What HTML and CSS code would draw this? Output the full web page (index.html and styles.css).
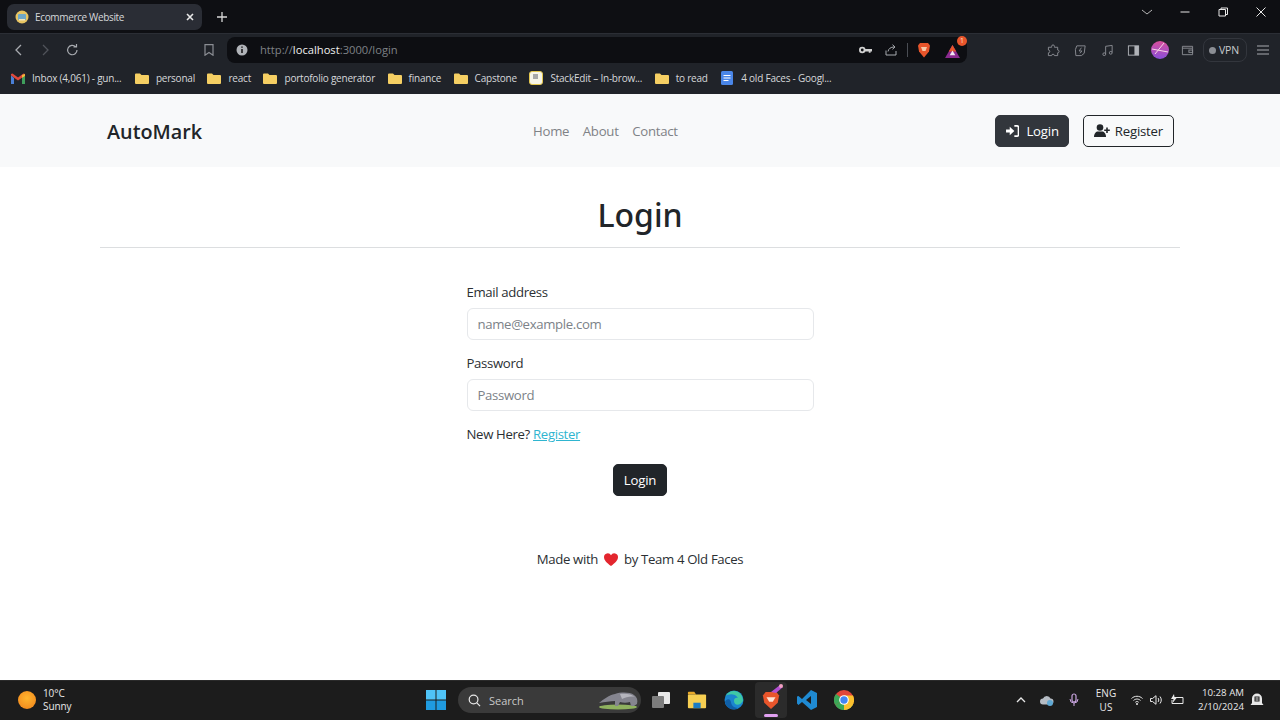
FILE: index.html
```html
<!DOCTYPE html>
<html lang="en">
<head>
<meta charset="utf-8">
<title>Ecommerce Website</title>
<link rel="stylesheet" href="styles.css">
</head>
<body>
<div class="app">
  <div class="tabstrip">
    <div class="tab">
      <svg class="tab-fav" viewBox="0 0 14 14"><circle cx="7" cy="7" r="6.5" fill="#e8c563"/><rect x="3" y="4" width="8" height="6" rx="1" fill="#6fa8c9"/><rect x="4" y="9" width="6" height="1.5" fill="#f0e6c0"/></svg>
      <span class="tab-title">Ecommerce Website</span>
      <svg class="tab-x" viewBox="0 0 8 8"><path d="M1 1l6 6M7 1L1 7" stroke="#e8e8e8" stroke-width="1.6"/></svg>
    </div>
    <svg class="tab-new" viewBox="0 0 10 10"><path d="M5 0v10M0 5h10" stroke="#d8d8d8" stroke-width="1.3"/></svg>
    <div class="win-controls">
      <svg class="win-btn" viewBox="0 0 38 12"><path d="M14 4l5 4 5-4" fill="none" stroke="#b5b5b5"/></svg>
      <svg class="win-btn" viewBox="0 0 38 12"><path d="M14.500 6h9" stroke="#e8e8e8" stroke-width="1"/></svg>
      <svg class="win-btn" viewBox="0 0 38 12"><path d="M15 3.500h6.500v6.500H15zM17 3.500V2h6.500v6.500H21.500" fill="none" stroke="#e8e8e8"/></svg>
      <svg class="win-btn" viewBox="0 0 38 12"><path d="M14.500 1.500l9 9M23.500 1.500l-9 9" stroke="#e8e8e8"/></svg>
    </div>
  </div>

  <div class="toolbar">
    <svg class="tb-icon" viewBox="0 0 27 14"><path d="M16 2l-5 5 5 5" fill="none" stroke="#a8abb0" stroke-width="1.3"/></svg>
    <svg class="tb-icon" viewBox="0 0 27 14"><path d="M11 2l5 5-5 5" fill="none" stroke="#50535a" stroke-width="1.3"/></svg>
    <svg class="tb-icon" viewBox="0 0 27 14"><path d="M18 7a4.700 4.700 0 1 1-1.400-3.300M17.500 1v3h-3" fill="none" stroke="#a8abb0" stroke-width="1.2"/></svg>
    <svg class="tb-bookmark" viewBox="0 0 10 12"><path d="M1 .700h8v10.500L5 8.500l-4 2.700z" fill="none" stroke="#8b8e94" stroke-width="1.200"/></svg>
    <div class="urlbar">
      <svg class="url-info" viewBox="0 0 12 12"><circle cx="6" cy="6" r="5.500" fill="#b0b3b8"/><path d="M6 5v4M6 2.500v1.300" stroke="#111" stroke-width="1.500"/></svg>
      <span class="url-text">http://<b class="url-host">localhost</b>:3000/login</span>
      <svg class="url-key" viewBox="0 0 14 8"><circle cx="3.500" cy="4" r="2.500" fill="none" stroke="#d0d0d0" stroke-width="2"/><path d="M6 3h8v2.500h-1.500V7h-2V5.500H6z" fill="#d0d0d0"/></svg>
      <svg class="url-share" viewBox="0 0 12 12"><path d="M1 6.500V11h10V7M3 7.500c.5-3 3-4.500 6-4.500M7.500 .700L10 3 7.500 5.300" fill="none" stroke="#a8abb0"/></svg>
      <span class="url-sep"></span>
      <svg class="url-brave" viewBox="0 0 14 16"><path d="M3 1h8l2 2.500-1 6L7 15.500 2 9.500 1 3.500z" fill="#e8552b"/><path d="M4 5h6L8.500 9H5.500z" fill="#f7c9a8"/></svg>
      <div class="url-rewards">
        <svg class="rewards-tri" viewBox="0 0 16 14"><path d="M8 0l8 14H0z" fill="#8b2a8f"/><path d="M8 0l4 7H4z" fill="#e8552b"/><path d="M8 6l3 5H5z" fill="#f3e8f3"/></svg>
        <span class="badge">1</span>
      </div>
    </div>
    <svg class="ext ext-first" viewBox="0 0 14 14"><path d="M5 2.500a1.500 1.500 0 0 1 3 0V3.500h3.500V6.500a1.500 1.500 0 0 1 0 3V12.500H8a1.500 1.500 0 0 0-3 0H1.500V9.500a1.500 1.500 0 0 0 0-3V3.500H5z" fill="none" stroke="#8b8e94"/></svg>
    <svg class="ext" viewBox="0 0 14 14"><path d="M3 2h9l-1 8-3 2.500H2L1.500 6z" fill="none" stroke="#8b8e94"/><path d="M8 4L5.500 7.500h3L6.500 10" fill="none" stroke="#8b8e94"/></svg>
    <svg class="ext" viewBox="0 0 14 14"><path d="M5 11V2.500l7-1V9" fill="none" stroke="#8b8e94"/><circle cx="3.500" cy="11" r="1.500" fill="none" stroke="#8b8e94"/><circle cx="10.500" cy="9.500" r="1.500" fill="none" stroke="#8b8e94"/></svg>
    <svg class="ext ext-tight" viewBox="0 0 14 14"><rect x="1.500" y="2" width="11" height="10" fill="none" stroke="#b0b3b8"/><rect x="8" y="2" width="4.500" height="10" fill="#b0b3b8"/></svg>
    <svg class="avatar" viewBox="0 0 18 18"><defs><linearGradient id="av" x1="0" y1="0" x2="0" y2="1"><stop offset="0" stop-color="#d94f9c"/><stop offset="1" stop-color="#8a4fd9"/></linearGradient></defs><circle cx="9" cy="9" r="9" fill="url(#av)"/><path d="M1 8l16 3M4 13L13 2" stroke="#f5d5e5" stroke-width="1"/></svg>
    <svg class="ext ext-wallet" viewBox="0 0 14 14"><path d="M12.500 4.500V2.500h-11v9h11v-7h-11" fill="none" stroke="#8b8e94"/><rect x="8.500" y="6.500" width="4" height="2.500" fill="none" stroke="#8b8e94"/></svg>
    <div class="vpn"><span class="vpn-dot"></span>VPN</div>
    <svg class="menu" viewBox="0 0 12 10"><path d="M0 1h12M0 5h12M0 9h12" stroke="#a8abb0"/></svg>
  </div>

  <div class="bookmarks">
    <div class="bm bm-first">
      <svg class="bm-icon" viewBox="0 0 14 11"><path d="M0 2.500l7 5 7-5V1L12.500.500 7 4.500 1.500.500 0 1z" fill="#e0483a"/><path d="M0 2.500V11h3V5z" fill="#4a7fd6"/><path d="M14 2.500V11h-3V5z" fill="#3f9e5c"/><path d="M11 2l3-1v2l-3 2z" fill="#f0b93a"/></svg>
      <span>Inbox (4,061) - gun...</span>
    </div>
    <div class="bm"><svg class="bm-icon" viewBox="0 0 14 11"><path d="M0 1.500A1 1 0 0 1 1 .500h4l1.500 1.500H13a1 1 0 0 1 1 1v7a1 1 0 0 1-1 1H1a1 1 0 0 1-1-1z" fill="#f5cf63"/></svg><span>personal</span></div>
    <div class="bm"><svg class="bm-icon" viewBox="0 0 14 11"><path d="M0 1.500A1 1 0 0 1 1 .500h4l1.500 1.500H13a1 1 0 0 1 1 1v7a1 1 0 0 1-1 1H1a1 1 0 0 1-1-1z" fill="#f5cf63"/></svg><span>react</span></div>
    <div class="bm"><svg class="bm-icon" viewBox="0 0 14 11"><path d="M0 1.500A1 1 0 0 1 1 .500h4l1.500 1.500H13a1 1 0 0 1 1 1v7a1 1 0 0 1-1 1H1a1 1 0 0 1-1-1z" fill="#f5cf63"/></svg><span>portofolio generator</span></div>
    <div class="bm"><svg class="bm-icon" viewBox="0 0 14 11"><path d="M0 1.500A1 1 0 0 1 1 .500h4l1.500 1.500H13a1 1 0 0 1 1 1v7a1 1 0 0 1-1 1H1a1 1 0 0 1-1-1z" fill="#f5cf63"/></svg><span>finance</span></div>
    <div class="bm"><svg class="bm-icon" viewBox="0 0 14 11"><path d="M0 1.500A1 1 0 0 1 1 .500h4l1.500 1.500H13a1 1 0 0 1 1 1v7a1 1 0 0 1-1 1H1a1 1 0 0 1-1-1z" fill="#f5cf63"/></svg><span>Capstone</span></div>
    <div class="bm"><svg class="bm-icon-tall" viewBox="0 0 14 14"><rect x=".500" y=".500" width="13" height="13" rx="2.500" fill="#f7f5e8" stroke="#e3c64d"/><rect x="4" y="3" width="5" height="5" fill="#a8a8a8"/></svg><span>StackEdit – In-brow...</span></div>
    <div class="bm"><svg class="bm-icon" viewBox="0 0 14 11"><path d="M0 1.500A1 1 0 0 1 1 .500h4l1.500 1.500H13a1 1 0 0 1 1 1v7a1 1 0 0 1-1 1H1a1 1 0 0 1-1-1z" fill="#f5cf63"/></svg><span>to read</span></div>
    <div class="bm"><svg class="bm-icon-tall" viewBox="0 0 14 14"><rect x="1" y="0" width="12" height="14" rx="1.500" fill="#4a86e8"/><path d="M3.500 4.500h7M3.500 7h7M3.500 9.500h5" stroke="#fff"/></svg><span>4 old Faces - Googl...</span></div>
  </div>

  <main class="page">
    <nav class="navbar">
      <a class="brand">AutoMark</a>
      <ul class="nav-links">
        <li>Home</li>
        <li>About</li>
        <li>Contact</li>
      </ul>
      <div class="nav-actions">
        <a class="btn btn-nav-dark">
          <svg class="btn-icon" viewBox="0 0 14 13"><path d="M0 5h4V2l5 4.500L4 11V8H0z" fill="#fff"/><path d="M9 1h3a1.500 1.500 0 0 1 1.500 1.500v8A1.500 1.500 0 0 1 12 12H9" fill="none" stroke="#fff" stroke-width="1.800"/></svg>
          Login
        </a>
        <a class="btn btn-outline">
          <svg class="btn-icon-wide" viewBox="0 0 16 13"><circle cx="6" cy="3.500" r="3.300" fill="#212529"/><path d="M0 13c0-3.500 2-5.500 4-5.500h4c2 0 4 2 4 5.500z" fill="#212529"/><path d="M13 3.500v5.500M10.200 6.200h5.600" stroke="#212529" stroke-width="1.600"/></svg>
          Register
        </a>
      </div>
    </nav>

    <section class="content">
      <h1 class="title">Login</h1>
      <hr class="rule">
      <form class="form">
        <label class="label">Email address</label>
        <input class="input" placeholder="name@example.com">
        <label class="label label-second">Password</label>
        <input class="input" placeholder="Password">
        <p class="hint">New Here? <a class="link">Register</a></p>
        <div class="submit-row"><button class="btn btn-dark" type="button">Login</button></div>
      </form>
      <footer class="footer">Made with <svg class="heart" viewBox="0 0 14 13"><path d="M7 13C3 10 0 7.500 0 4a3.700 3.700 0 0 1 7-1.700A3.700 3.700 0 0 1 14 4c0 3.500-3 6-7 9z" fill="#e3262e"/></svg> by Team 4 Old Faces</footer>
    </section>
  </main>

  <div class="taskbar">
    <div class="weather">
      <span class="sun"></span>
      <div class="weather-text"><span class="temp">10°C</span><span class="cond">Sunny</span></div>
    </div>
    <div class="task-center">
      <svg class="start" viewBox="0 0 20 20"><rect width="9.500" height="9.500" fill="#4fc3f7"/><rect x="10.500" width="9.500" height="9.500" fill="#4fc3f7"/><rect y="10.500" width="9.500" height="9.500" fill="#1f9be0"/><rect x="10.500" y="10.500" width="9.500" height="9.500" fill="#1f9be0"/></svg>
      <div class="search">
        <svg class="search-icon" viewBox="0 0 14 14"><circle cx="6" cy="6" r="4.700" fill="none" stroke="#e8e8e8" stroke-width="1.300"/><path d="M9.500 9.500L13 13" stroke="#e8e8e8" stroke-width="1.300"/></svg>
        <span class="search-text">Search</span>
        <svg class="anteater" viewBox="0 0 42 20"><ellipse cx="20" cy="17" rx="19" ry="2.500" fill="#8fb25f"/><path d="M1 13C6 9 11 5 17 4c6-2 15-2 19 1 3 2 4 5 3 9l-3 2h-3l-1-4c-3 1-7 1-10 0l-2 4h-3l0-5c-5 0-10 1-16 2z" fill="#85858f"/><path d="M22 4c5-1 12 0 15 3-4-1-9 0-13 2z" fill="#b5b5bd"/></svg>
      </div>
      <svg class="app-icon taskview" viewBox="0 0 20 20"><rect x="7" y="2" width="12" height="12" rx="1" fill="#e8e8e8"/><rect x="1" y="6" width="12" height="12" rx="1" fill="#7d7d7d"/></svg>
      <svg class="app-icon" viewBox="0 0 22 20"><path d="M1 2a1 1 0 0 1 1-1h6l2 3H1z" fill="#e8a92a"/><rect x="1" y="4" width="20" height="15" rx="1" fill="#f7cf52"/><rect x="7" y="13" width="8" height="6" fill="#1c7cc4"/></svg>
      <svg class="app-icon app-icon-far" viewBox="0 0 20 20"><circle cx="10" cy="10" r="9.500" fill="#1b86cf"/><path d="M19 11c0-6-4-10-9-10C6 1 3 3 1.500 6 4 4 11 3 14 8c-2-.5-4 0-4 3 0 4 5 6 9 0z" fill="#3fc9a5"/><path d="M7 12c0 3 3 6 7 6-4 3-12 1-13-6 1-3 5-4 6 0z" fill="#0f5fa8"/></svg>
      <div class="active-app">
        <svg class="brave-task" viewBox="0 0 20 22"><path d="M4 2h12l3 4-1.500 8L10 21 2.500 14 1 6z" fill="#e8552b"/><path d="M5 8h10l-3 5H8z" fill="#fbe3d5"/></svg>
        <svg class="brave-badge" viewBox="0 0 14 10"><path d="M1 8L10 1l3 2-7 6z" fill="#b24fd0"/><circle cx="11" cy="2" r="2" fill="#f0a0c0"/></svg>
        <span class="active-bar"></span>
      </div>
      <svg class="app-icon" viewBox="0 0 20 20"><path d="M14 0l6 3v14l-6 3-9-8-3.500 3L0 13.500V6.500L1.500 6 5 9zM14 6l-5 4 5 4z" fill="#1f8ad2"/></svg>
      <svg class="app-icon app-icon-far" viewBox="0 0 20 20"><circle cx="10" cy="10" r="10" fill="#e0463a"/><path d="M10 10L1.300 15A10 10 0 0 1 2 4z" fill="#3aa757"/><path d="M10 10L1.300 15A10 10 0 0 0 19.500 13z" fill="#3aa757"/><path d="M10 5.500h9A10 10 0 0 1 10 20z" fill="#fbc02d"/><circle cx="10" cy="10" r="4.800" fill="#fff"/><circle cx="10" cy="10" r="3.700" fill="#4285f4"/></svg>
    </div>
    <div class="tray">
      <svg class="tray-chev" viewBox="0 0 10 6"><path d="M1 5l4-4 4 4" fill="none" stroke="#e8e8e8" stroke-width="1.300"/></svg>
      <svg class="tray-cloud" viewBox="0 0 14 11"><path d="M3 9.500a3 3 0 0 1 0-6 4 4 0 0 1 7.500 0 3 3 0 0 1 0 6z" fill="#b5bcc4"/><circle cx="10" cy="8" r="3" fill="#5fa8d3"/></svg>
      <svg class="tray-mic" viewBox="0 0 10 14"><rect x="3" y="1" width="4" height="8" rx="2" fill="none" stroke="#c9a5e0" stroke-width="1.200"/><path d="M1 6a4 4 0 0 0 8 0M5 10v3" fill="none" stroke="#c9a5e0"/></svg>
      <div class="lang"><span>ENG</span><span>US</span></div>
      <svg class="tray-wifi" viewBox="0 0 12 10"><path d="M.5 3.500c3-3 8-3 11 0M2.500 5.500c2-2 5-2 7 0M4.300 7.300c1-1 2.400-1 3.400 0" fill="none" stroke="#e8e8e8"/><circle cx="6" cy="9" r="1" fill="#e8e8e8"/></svg>
      <svg class="tray-vol" viewBox="0 0 12 10"><path d="M.5 3.500h2L6 .7v8.600L2.500 6.500h-2z" fill="none" stroke="#e8e8e8"/><path d="M8 3c1 1 1 3 0 4M10 1.500c1.700 2 1.700 5 0 7" fill="none" stroke="#e8e8e8"/></svg>
      <svg class="tray-bat" viewBox="0 0 14 12"><path d="M4 3.500h9v6H2V6" fill="none" stroke="#e8e8e8"/><path d="M4 0L1 5h2.500L2.500 9 7 3.500H4.500z" fill="#e8e8e8"/></svg>
      <div class="clock"><span>10:28 AM</span><span>2/10/2024</span></div>
      <svg class="tray-bell" viewBox="0 0 14 14"><path d="M2 10V5.500a5 5 0 0 1 10 0V10l1.500 2H.5z" fill="#e8e8e8"/><rect x="4.500" y="3.500" width="5" height="5" fill="#1c1c1c"/><path d="M5.500 5h3M5.500 7h3" stroke="#e8e8e8"/></svg>
    </div>
  </div>
</div>
</body>
</html>
```

FILE: styles.css
```css
* { box-sizing: border-box; }
html, body { margin: 0; padding: 0; height: 100%; overflow: hidden; }
body { font-family: "Open Sans", "Noto Sans", "Liberation Sans", sans-serif; color: #212529; background: #fff; }
.app { display: flex; flex-direction: column; width: 1280px; height: 720px; }

.tabstrip { display: flex; align-items: center; height: 33px; padding-left: 7px; background: #0e0f13; }
.tab { display: flex; align-items: center; width: 195px; height: 26px; padding: 0 8px; border-radius: 7px; background: #2a2d35; }
.tab-fav { width: 14px; height: 14px; flex: none; }
.tab-title { flex: 1; margin-left: 6px; font-size: 10px; letter-spacing: -0.35px; color: #d6d8db; white-space: nowrap; }
.tab-x { width: 8px; height: 8px; }
.tab-new { width: 10px; height: 10px; margin-left: 15px; }
.win-controls { display: flex; align-items: center; margin-left: auto; height: 100%; padding-bottom: 9px; }
.win-btn { width: 38px; height: 12px; display: block; }

.toolbar { display: flex; align-items: center; height: 33px; padding-left: 5px; background: #202329; border-top: 1px solid #2b2e35; }
.tb-icon { width: 27px; height: 14px; flex: none; }
.tb-bookmark { width: 10px; height: 12px; margin-left: 118px; flex: none; }
.urlbar { display: flex; align-items: center; width: 740px; height: 26px; margin-left: 13px; padding-left: 9px; border-radius: 8px; background: #0d0e12; }
.url-info { width: 12px; height: 12px; flex: none; }
.url-text { margin-left: 12px; padding-bottom: 1px; font-size: 11.200px; color: #7e8186; white-space: nowrap; }
.url-host { font-weight: 400; color: #f0f0f0; }
.url-key { width: 13px; height: 8px; margin-left: auto; flex: none; }
.url-share { width: 12px; height: 12px; margin-left: 13px; flex: none; }
.url-sep { width: 1px; height: 14px; margin-left: 10px; background: #4a4d54; flex: none; }
.url-brave { width: 14px; height: 16px; margin-left: 9px; flex: none; }
.url-rewards { position: relative; width: 16px; height: 14px; margin-left: 14px; margin-right: 6px; flex: none; }
.rewards-tri { display: block; width: 15px; height: 13px; margin-top: 2px; }
.badge { position: absolute; top: -7px; right: -6px; width: 10px; height: 10px; border-radius: 50%; background: #e8552b; color: #fde0d0; font-size: 7px; line-height: 10px; text-align: center; }
.ext { width: 13px; height: 13px; margin-left: 14px; flex: none; }
.ext-first { margin-left: 80px; }
.ext-tight { margin-left: 13px; }
.avatar { width: 18px; height: 18px; margin-left: 11px; flex: none; }
.ext-wallet { margin-left: 12px; }
.vpn { display: flex; align-items: center; gap: 3px; width: 44px; height: 24px; margin-left: 9px; padding-left: 5px; border: 1px solid #33363d; border-radius: 8px; font-size: 10.500px; letter-spacing: -0.2px; color: #c9cbce; }
.vpn-dot { width: 7px; height: 7px; border-radius: 50%; background: #8b8e94; flex: none; }
.menu { width: 12px; height: 10px; margin-left: 10px; flex: none; }

.bookmarks { display: flex; align-items: center; gap: 12.500px; height: 28px; padding: 0 0 4px 11px; background: #202329; }
.bm { display: flex; align-items: center; gap: 7px; font-size: 10px; letter-spacing: -0.22px; color: #d6d8db; white-space: nowrap; }
.bm-first { margin-right: 1px; }
.bm-icon { width: 14px; height: 11px; flex: none; }
.bm-icon-tall { width: 14px; height: 14px; flex: none; }

.page { flex: 1; display: flex; flex-direction: column; background: #fff; }
.navbar { display: flex; align-items: center; height: 73px; padding: 0 106px 0 107px; background: #f8f9fa; }
.brand { width: 426px; padding-top: 2px; font-size: 19.800px; font-weight: 600; color: #212529; }
.nav-links { display: flex; gap: 13.500px; margin: 0; padding: 0; list-style: none; font-size: 13.200px; letter-spacing: -0.25px; color: #7f8286; }
.nav-actions { display: flex; gap: 14px; margin-left: auto; }
.btn { display: inline-flex; align-items: center; height: 32px; padding: 0 10px; border: 1px solid #212529; border-radius: 5px; font-family: inherit; font-size: 13.200px; letter-spacing: -0.2px; white-space: nowrap; }
.btn-dark { background: #212529; color: #fff; }
.btn-nav-dark { padding: 0 9px 0 10px; background: #32363c; border-color: #32363c; color: #fff; }
.btn-outline { background: transparent; color: #212529; }
.btn-icon { width: 13px; height: 12px; margin-right: 7px; }
.btn-icon-wide { width: 16px; height: 13px; margin-right: 5px; }

.content { display: flex; flex-direction: column; align-items: center; }
.title { margin: 23px 0 0; font-family: "Noto Sans", "Open Sans", sans-serif; font-size: 32px; line-height: 50px; font-weight: 500; color: #212529; }
.rule { width: 1080px; margin: 7px 0 0; border: 0; border-top: 1px solid #dcdee0; }
.form { display: flex; flex-direction: column; width: 347px; margin-top: 34px; }
.label { font-size: 13.200px; letter-spacing: -0.35px; line-height: 20px; color: #2b2f33; }
.label-second { margin-top: 13px; }
.input { width: 100%; height: 32px; margin-top: 6px; padding: 0 10px; border: 1px solid #e6e8eb; border-radius: 6px; font-family: inherit; font-size: 13.200px; letter-spacing: -0.35px; color: #212529; background: #fff; }
.input::placeholder { color: #7c8288; opacity: 1; }
.hint { margin: 13px 0 0; font-size: 13.200px; letter-spacing: -0.35px; line-height: 20px; color: #2b2f33; }
.link { color: #2fb5d0; text-decoration: underline; }
.submit-row { display: flex; justify-content: center; margin-top: 20px; }
.footer { display: flex; align-items: center; gap: 6px; margin-top: 53px; font-size: 13.200px; letter-spacing: -0.35px; line-height: 20px; color: #2b2f33; }
.heart { width: 14px; height: 13px; }

.taskbar { display: flex; align-items: center; position: relative; height: 40px; padding-bottom: 1px; background: #1c1c1c; border-top: 1px solid #2a2a2a; }
.weather { display: flex; align-items: center; width: 426px; padding-left: 18px; }
.sun { width: 18px; height: 18px; border-radius: 50%; background: radial-gradient(circle at 50% 40%, #ffb52e, #f0801a); flex: none; }
.weather-text { display: flex; flex-direction: column; margin-left: 7px; font-size: 10px; letter-spacing: -0.1px; line-height: 13px; color: #e8e8e8; }
.task-center { display: flex; align-items: center; }
.start { width: 20px; height: 20px; flex: none; }
.search { display: flex; align-items: center; width: 183px; height: 26px; margin-left: 12px; padding-left: 10px; border-radius: 13px; background: #3a3a3a; }
.search-icon { width: 13px; height: 13px; flex: none; }
.search-text { margin-left: 8px; font-size: 11px; color: #c8c8c8; }
.anteater { width: 42px; height: 20px; margin-left: auto; margin-right: 1px; }
.app-icon { width: 20px; height: 20px; margin-left: 16px; flex: none; }
.app-icon-far { margin-left: 17px; }
.taskview { margin-left: 10px; }
.active-app { position: relative; display: flex; align-items: center; justify-content: center; width: 32px; height: 36px; margin-left: 11px; border-radius: 4px; background: #2b2b2b; flex: none; }
.active-app + .app-icon { margin-left: 10px; }
.brave-task { width: 18px; height: 20px; }
.brave-badge { position: absolute; top: 2px; right: 3px; width: 14px; height: 10px; }
.active-bar { position: absolute; bottom: 1px; left: 9px; width: 14px; height: 3px; border-radius: 2px; background: #e0a0f0; }
.tray { display: flex; align-items: center; margin-left: auto; padding-right: 16px; color: #e8e8e8; }
.tray-chev { width: 10px; height: 6px; }
.tray-cloud { width: 14px; height: 11px; margin-left: 14px; }
.tray-mic { width: 10px; height: 14px; margin-left: 15px; }
.lang { display: flex; flex-direction: column; align-items: center; width: 26px; margin-left: 14px; font-size: 10px; line-height: 14px; }
.tray-wifi { width: 12px; height: 10px; margin-left: 12px; }
.tray-vol { width: 12px; height: 10px; margin-left: 7px; }
.tray-bat { width: 14px; height: 12px; margin-left: 8px; }
.clock { display: flex; flex-direction: column; align-items: flex-end; width: 48px; margin-left: 12px; font-size: 9.700px; line-height: 14px; white-space: nowrap; }
.tray-bell { width: 14px; height: 14px; margin-left: 6px; }
```
